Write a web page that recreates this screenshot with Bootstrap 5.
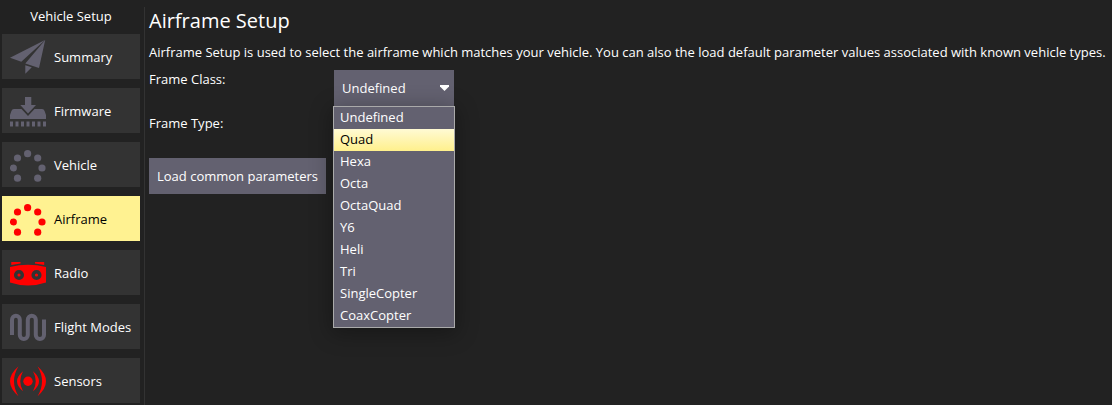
<!DOCTYPE html>
<html lang="en">
<head>
<meta charset="utf-8">
<title>Vehicle Setup</title>
<link href="https://cdn.jsdelivr.net/npm/bootstrap@5.3.0/dist/css/bootstrap.min.css" rel="stylesheet">
<style>
body{background:#222;color:#fff;font:13px/18px "Open Sans","Noto Sans",sans-serif;height:405px;overflow:hidden}
.setup-side{width:145px;height:405px;padding:7px 0 0 2px}
.side-rule{width:1px;height:398px;margin-top:7px;background:#333;margin-left:-1px}
.side-title{width:138px;height:27px}
.side-btn{width:138px;height:45px;margin-bottom:9px;background:#333;color:#fff;padding:0 0 0 8px;border:0;border-radius:0;font:inherit;white-space:nowrap}
.side-btn svg{width:36px;height:36px;flex:none;margin:0 8px 1px 0;color:#636170}
.side-btn.alert-state svg{color:#f00}
.side-btn.selected{background:#fff291;color:#000}
.setup-main{padding:7px 0 0 4px}
.page-title{font-size:20px;line-height:28px;font-weight:400}
.setup-main p{margin-top:8px;line-height:18px}
.form-line{height:44px}
.form-line label{width:185px}
.form-first{margin-top:9px}
.combo{width:120px;height:36px;background:#636170;padding:0 5px 0 8px}
.combo-menu{position:absolute;left:-1px;top:36px;width:122px;height:222px;background:#636170;border:1px solid #aaa;box-shadow:0 4px 20px 2px rgba(0,0,0,.3);z-index:3}
.combo-menu li{height:22px;line-height:20px;padding-left:6px}
.combo-menu li.hot{background:linear-gradient(#fffad4,#fff08c);color:#000}
.load-btn{width:177px;height:36px;background:#636170;color:#fff;border:0;border-radius:0;padding:0;font:inherit}
</style>
</head>
<body>
<div class="d-flex">
<nav class="setup-side flex-shrink-0">
<div class="side-title text-center">Vehicle Setup</div>
<button class="side-btn d-flex align-items-center"><svg viewBox="0 0 36 36"><path fill="currentColor" d="M35 2 0 19.700l11.300 4zM35.200 2 15.300 25.500 29 30zM15.300 27.200v8.500l6.500-6.400z"/></svg>Summary</button>
<button class="side-btn d-flex align-items-center"><svg viewBox="0 0 36 36"><g fill="currentColor"><path d="M15 5h6.300v8H26l-8 8.500L10.300 13H15z"/><path d="M4 17h7.500l6.500 7 6.500-7H32q2 0 2.600 2l1.400 4v4H0v-4l1.400-4Q2 17 4 17z"/><path d="M0 29.500h3v5H0zm5.500 0h3v5h-3zm5.500 0h3v5h-3zm5.500 0h3v5h-3zm5.500 0h3v5h-3zm5.500 0h3v5h-3zm5.500 0h3v5h-3z"/></g></svg>Firmware</button>
<button class="side-btn d-flex align-items-center"><svg viewBox="0 0 36 36"><g fill="currentColor"><circle cx="17.600" cy="7.700" r="3.600"/><circle cx="7.500" cy="12" r="3.600"/><circle cx="27.700" cy="12" r="3.600"/><circle cx="3.400" cy="22" r="3.500"/><circle cx="32" cy="22" r="3.600"/><circle cx="7.500" cy="32.200" r="3.600"/><circle cx="27.700" cy="32.200" r="3.600"/></g></svg>Vehicle</button>
<button class="side-btn alert-state selected d-flex align-items-center"><svg viewBox="0 0 36 36"><g fill="currentColor"><circle cx="17.600" cy="7.700" r="3.600"/><circle cx="7.500" cy="12" r="3.600"/><circle cx="27.700" cy="12" r="3.600"/><circle cx="3.400" cy="22" r="3.500"/><circle cx="32" cy="22" r="3.600"/><circle cx="7.500" cy="32.200" r="3.600"/><circle cx="27.700" cy="32.200" r="3.600"/></g></svg>Airframe</button>
<button class="side-btn alert-state d-flex align-items-center"><svg viewBox="0 0 36 36"><path fill="currentColor" d="M1.300 8H10.500v1.500L1.300 11zM25 8h9.200v3L25 9.500zM0 13Q18 8.500 36 13v15.500Q18 34.500 0 28.500z"/><g fill="none" stroke="#333" stroke-width="3.500"><circle cx="9" cy="21" r="3.300"/><circle cx="26.500" cy="21" r="3.300"/></g></svg>Radio</button>
<button class="side-btn d-flex align-items-center"><svg viewBox="0 0 36 36"><path fill="none" stroke="currentColor" stroke-width="4" d="M2 27V11.700a3.900 3.900 0 0 1 7.800 0V27a4 4 0 0 0 8 0V11.700a4 4 0 0 1 8 0V27a4.100 4.100 0 0 0 8.200 0V11.500"/></svg>Flight Modes</button>
<button class="side-btn alert-state d-flex align-items-center"><svg viewBox="0 0 36 36"><g fill="currentColor"><circle cx="18" cy="19.300" r="4.700"/><path d="M8.500 4.300Q-8.500 19.300 8.500 34.300Q-.5 19.300 8.500 4.300zM27.500 4.300Q44.500 19.300 27.500 34.300Q36.500 19.300 27.500 4.300zM13 9.300Q1 19.300 13 29.300Q7.500 19.300 13 9.300zM23 9.300Q35 19.300 23 29.300Q28.500 19.300 23 9.300z"/></g></svg>Sensors</button>
</nav>
<div class="side-rule flex-shrink-0"></div>
<main class="setup-main flex-grow-1 text-nowrap">
<h1 class="page-title mb-0">Airframe Setup</h1>
<p class="mb-0">Airframe Setup is used to select the airframe which matches your vehicle. You can also the load default parameter values associated with known vehicle types.</p>
<div class="form-line form-first d-flex"><label>Frame Class:</label>
<div class="combo position-relative d-flex align-items-center justify-content-between"><span>Undefined</span><svg width="9" height="6" viewBox="0 0 9 6"><path fill="#fff" d="M0 0h9v1.500L4.500 6 0 1.500z"/></svg>
<ul class="combo-menu list-unstyled mb-0"><li>Undefined</li><li class="hot">Quad</li><li>Hexa</li><li>Octa</li><li>OctaQuad</li><li>Y6</li><li>Heli</li><li>Tri</li><li>SingleCopter</li><li>CoaxCopter</li></ul></div></div>
<div class="form-line"><label>Frame Type:</label></div>
<button class="load-btn d-block">Load common parameters</button>
</main>
</div>
<script src="https://cdn.jsdelivr.net/npm/bootstrap@5.3.0/dist/js/bootstrap.bundle.min.js"></script>
</body>
</html>
